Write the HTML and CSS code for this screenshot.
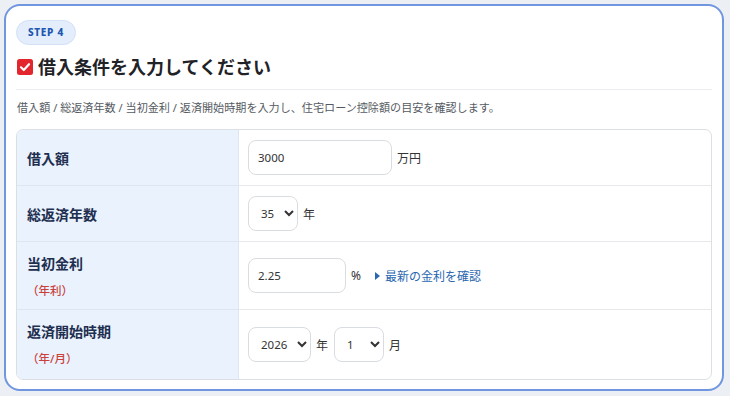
FILE: index.html
```html
<!DOCTYPE html>
<html lang="ja">
<head>
    <meta charset="utf-8">
    <link rel="stylesheet" href="styles.css">
</head>
<body>
    <section class="step-card">
        <span class="step-badge">STEP 4</span>

        <h2 class="step-title">
            <svg class="check-icon" width="16" height="16" viewBox="0 0 16 16">
                <rect x="0" y="0" width="16" height="16" rx="2.5" fill="#e3262d"/>
                <path d="M4 8.3 L6.8 11 L12 5.2" fill="none" stroke="#fff" stroke-width="2.2" stroke-linecap="round" stroke-linejoin="round"/>
            </svg>
            借入条件を入力してください
        </h2>

        <p class="step-desc">借入額 / 総返済年数 / 当初金利 / 返済開始時期を入力し、住宅ローン控除額の目安を確認します。</p>

        <div class="form-table">
            <div class="form-label">借入額</div>
            <div class="form-field">
                <input type="text" class="text-input wide" value="3000">
                <span class="unit">万円</span>
            </div>

            <div class="form-label">総返済年数</div>
            <div class="form-field">
                <select class="select-input years">
                    <option>35</option>
                </select>
                <span class="unit">年</span>
            </div>

            <div class="form-label tall">
                当初金利
                <span class="sub-label">（年利）</span>
            </div>
            <div class="form-field">
                <input type="text" class="text-input narrow" value="2.25">
                <span class="unit percent">%</span>
                <a href="#" class="rate-link">最新の金利を確認</a>
            </div>

            <div class="form-label tall last">
                返済開始時期
                <span class="sub-label">（年/月）</span>
            </div>
            <div class="form-field last">
                <select class="select-input year">
                    <option>2026</option>
                </select>
                <span class="unit">年</span>
                <select class="select-input month">
                    <option>1</option>
                </select>
                <span class="unit">月</span>
            </div>
        </div>
    </section>
</body>
</html>
```

FILE: styles.css
```css
body {
    margin: 0;
    padding: 4px 6px 6px 4px;
    background-color: #eceff4;
    font-family: 'Noto Sans', 'Noto Sans CJK JP', sans-serif;
    color: #333;
}
.step-card {
    box-sizing: border-box;
    width: 720px;
    height: 387px;
    background-color: #fff;
    border: 2px solid #7196e0;
    border-radius: 16px;
    padding: 13px 10px 10px 10px;
}
.step-badge {
    display: inline-block;
    background-color: #e3edfb;
    color: #2057b0;
    border: 1px solid #d3e1f7;
    font-size: 10px;
    font-weight: 800;
    letter-spacing: 0.7px;
    padding: 5px 11px 5px 11px;
    border-radius: 13px;
    line-height: 13px;
}
.step-title {
    display: flex;
    align-items: center;
    gap: 5px;
    margin: 10px 0 0 0;
    padding-bottom: 10px;
    border-bottom: 1px solid #ebedf0;
    font-size: 18px;
    font-weight: 700;
    color: #1f2227;
    line-height: 24px;
}
.check-icon {
    flex: none;
    margin-left: 1px;
}
.step-desc {
    margin: 10px 0 13px 1px;
    font-size: 11.1px;
    color: #555a62;
    line-height: 16px;
}
.form-table {
    display: grid;
    grid-template-columns: 222px 1fr;
    border: 1px solid #dcdfe4;
    border-radius: 7px;
    overflow: hidden;
}
.form-label {
    background-color: #eaf2fd;
    border-bottom: 1px solid #dde6f2;
    border-right: 1px solid #dde6f2;
    padding: 0 10px;
    height: 55px;
    display: flex;
    flex-direction: column;
    justify-content: center;
    font-size: 14px;
    font-weight: 700;
    color: #1e2f50;
}
.form-label.tall {
    height: 68px;
    justify-content: flex-start;
    padding-top: 11px;
    box-sizing: border-box;
}
.form-label.tall.last {
    height: 69px;
}
.sub-label {
    display: block;
    margin-top: 9px;
    font-size: 11.5px;
    font-weight: 500;
    color: #c9413b;
}
.form-field {
    display: flex;
    align-items: center;
    gap: 5px;
    padding: 0 9px;
    border-bottom: 1px solid #e6e8eb;
}
.form-label.last,
.form-field.last {
    border-bottom: none;
}
.text-input {
    box-sizing: border-box;
    height: 35px;
    border: 1px solid #d9dce1;
    border-radius: 8px;
    padding: 0 9px;
    font-family: 'Noto Sans', sans-serif;
    font-size: 11.5px;
    color: #333;
    background-color: #fff;
}
.text-input.wide {
    width: 144px;
}
.text-input.narrow {
    width: 98px;
}
.select-input {
    box-sizing: border-box;
    height: 35px;
    border: 1px solid #d9dce1;
    border-radius: 8px;
    padding: 0 4px 0 8px;
    font-family: 'Noto Sans', sans-serif;
    font-size: 11.5px;
    color: #333;
    background-color: #fff;
}
.select-input.years {
    width: 50px;
}
.select-input.year {
    width: 63px;
}
.select-input.month {
    width: 50px;
    margin-left: 1px;
}
.unit {
    font-size: 12px;
    color: #333;
}
.unit.percent {
    margin-right: 9px;
}
.rate-link {
    font-size: 12px;
    color: #2a67b1;
    text-decoration: none;
}
.rate-link::before {
    content: '';
    display: inline-block;
    border-left: 5px solid #2a67b1;
    border-top: 4px solid transparent;
    border-bottom: 4px solid transparent;
    margin-right: 5px;
    vertical-align: 1px;
}
```
